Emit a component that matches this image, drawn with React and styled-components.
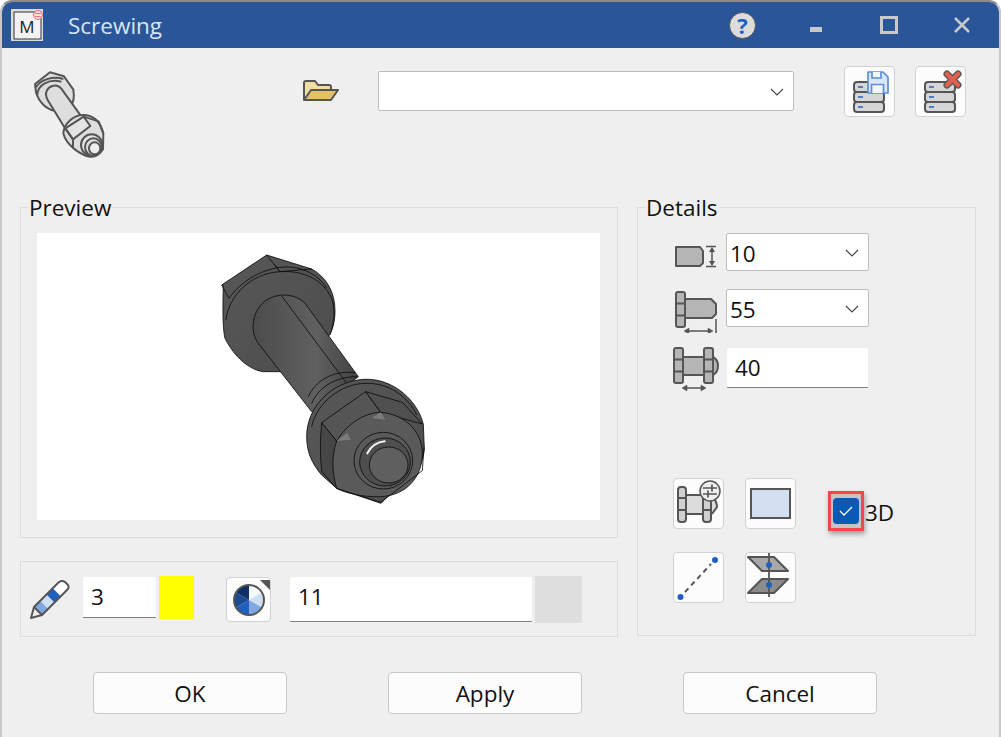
import styled, { createGlobalStyle } from "styled-components";

const GlobalStyle = createGlobalStyle`
  html, body { margin: 0; padding: 0; background: #fff; }
  * { box-sizing: border-box; }
`;

const INK = "#555";
const FILL = "#b5b5b5";
const BLUE = "#1f5fbf";

/* ---------- icons ---------- */

const AppIcon = () => (
  <svg width="32" height="32" viewBox="0 0 32 32">
    <rect width="32" height="32" fill="#dcdcdc" />
    <rect x="3" y="3" width="27" height="27" fill="#f2f2f2" stroke="#333" strokeWidth="1" />
    <text x="16" y="24" textAnchor="middle" fontFamily="Open Sans, sans-serif" fontSize="17" fill="#222">M</text>
    <g fill="#f7dcdc" stroke="#e57373" strokeWidth="1">
      <circle cx="27" cy="6" r="4.500" />
      <path d="M24 4.500h6M24 7.500h6" />
    </g>
  </svg>
);

const BoltSmall = () => (
  <svg width="74" height="90" viewBox="99 213 222 270">
    <g fill="#dedede" stroke={INK} strokeWidth="6" strokeLinejoin="round">
      <path d="M105 252l45-35 42 12 28 40c3 20 0 40-8 48-15 12-32 18-48 15-25-4-47-25-56-55z" />
      <path d="M108 262c12-22 50-35 82-25M112 285c0-30 35-50 72-40" fill="none" />
      <path d="M143 300c-12-22 0-38 14-42 10-3 20 0 27 8l62 86-50 34z" />
      <path d="M190 400c2-30 30-55 60-55 30 0 50 18 60 55l-1 48c-10 16-25 24-40 22-20-3-70-30-79-70z" />
      <path d="M196 385l55-35 20 28-52 40z" fill="#e4e4e4" />
      <path d="M196 385l23 33v28M251 350l45 14 14 36" fill="none" />
      <ellipse cx="275" cy="435" rx="32" ry="32" fill="#e4e4e4" />
      <ellipse cx="280" cy="441" rx="25" ry="26" fill="#dedede" />
      <ellipse cx="284" cy="445" rx="17" ry="18" fill="#eee" />
    </g>
  </svg>
);

const FolderIcon = () => (
  <svg width="38" height="24" viewBox="0 0 38 24">
    <path d="M2 21V4c0-1 .7-2 2-2h9l3 4h11c1 0 2 1 2 2v4" fill="#f0dda0" stroke={INK} strokeWidth="2" strokeLinejoin="round" />
    <path d="M2 21l7-10h27l-7 10z" fill="#e3c165" stroke={INK} strokeWidth="2" strokeLinejoin="round" />
  </svg>
);

const Chevron = () => (
  <svg width="14" height="8" viewBox="0 0 14 8">
    <path d="M1 1l6 6 6-6" fill="none" stroke="#444" strokeWidth="1.100" />
  </svg>
);

const DbStack = () => (
  <g fill="#d6d6d6" stroke={INK} strokeWidth="2">
    <rect x="10" y="16" width="30" height="10" rx="3" />
    <rect x="10" y="26" width="30" height="10" rx="3" />
    <rect x="10" y="36" width="30" height="10" rx="3" />
    <path d="M14 21h5M14 31h5M14 41h5" stroke={BLUE} strokeWidth="1.500" />
  </g>
);

const SaveDbIcon = () => (
  <svg width="51" height="51" viewBox="0 0 51 51">
    <DbStack />
    <path d="M24 6h15l5 5v16H24z" fill="#dbe6f6" stroke="#5a8fdc" strokeWidth="1.700" strokeLinejoin="round" />
    <path d="M28 6v6h9V6M27.500 27v-8.500h12V27" fill="#f3f6fb" stroke="#5a8fdc" strokeWidth="1.700" />
  </svg>
);

const DeleteDbIcon = () => (
  <svg width="51" height="51" viewBox="0 0 51 51">
    <DbStack />
    <path d="M32 8l11 11M43 8L32 19" stroke={INK} strokeWidth="7" strokeLinecap="round" />
    <path d="M32 8l11 11M43 8L32 19" stroke="#e0604f" strokeWidth="4.500" strokeLinecap="round" />
  </svg>
);

/* the big bolt, coordinates are 3x so the outlines come out at a pixel */
const BoltPreview = () => (
  <svg width="240" height="270" viewBox="0 0 720 810">
    <defs>
      <linearGradient id="steel" x1="0" y1="0" x2="1" y2="1">
        <stop offset="0" stopColor="#585858" />
        <stop offset="1" stopColor="#4c4c4c" />
      </linearGradient>
      <linearGradient id="shank" x1="0" y1="0" x2="1" y2="0">
        <stop offset="0" stopColor="#4c4c4c" />
        <stop offset="0.600" stopColor="#606060" />
        <stop offset="1" stopColor="#424242" />
      </linearGradient>
    </defs>
    <g stroke="#0c0c0c" strokeWidth="2.500" strokeLinejoin="round" fill="url(#steel)">
      <path d="M65 135L200 45l135 42c45 25 70 70 70 125 0 35-8 60-20 78l-135 105h-60c-55-8-95-60-115-100-5-20-8-60-5-160z" />
      <path d="M200 45l40 50 95-8M65 135l22 40M222 72l18 23" fill="none" />
      <path d="M87 175C125 120 185 90 240 82c55-6 110 15 140 62" fill="none" />
      <path d="M78 240C85 170 150 100 240 95c70-5 130 25 155 80 10 30 10 70-5 110" fill="none" />
      <path d="M175 310c-30-40-15-105 25-130 35-22 85-20 115 10l160 220-140 105z" fill="url(#shank)" />
      <path d="M245 168l205 275" fill="none" />
      <path d="M325 470c20-45 70-80 140-72" fill="none" />
      <path d="M335 490c18-45 70-80 135-80" fill="none" />
      <path d="M320 590c0-90 75-165 170-172 95-5 165 70 180 135l3 75c-5 50-30 85-70 100l-60 62-133-45-45-40c-30-35-45-70-45-115z" />
      <path d="M335 560c15-70 85-128 160-130 70-3 130 40 155 95" fill="none" />
      <path d="M365 548l45 55v142l-45-50c-5-50-5-100 0-147z" fill="#464646" />
      <path d="M365 548L497 455l45 62-132 86z" fill="#555" />
      <path d="M497 455l110 32 60 65-125-35z" fill="#505050" />
      <path d="M542 517c70 5 125 55 125 125 0 70-50 125-125 128-50 2-105-10-132-25-15-50-15-100 0-142 30-50 80-84 132-86z" fill="#5a5a5a" />
      <path d="M410 603l32-24 10 20zM515 534l27-17 14 22z" fill="#7c7c7c" stroke="none" />
      <path d="M410 745l132 42 125-95 5-70" fill="none" />
      <ellipse cx="550" cy="662" rx="88" ry="85" fill="#5a5a5a" />
      <ellipse cx="555" cy="666" rx="76" ry="72" fill="#4e4e4e" />
      <path d="M502 640c12-22 30-34 52-36" fill="none" stroke="#f2f2f2" strokeWidth="6" strokeLinecap="round" />
      <ellipse cx="566" cy="675" rx="58" ry="54" fill="#5f5f5f" />
    </g>
  </svg>
);

const Arrow = ({ x1, x2, y }) => (
  <g stroke={INK} fill={INK}>
    <path d={`M${x1 + 2} ${y}H${x2 - 2}`} strokeWidth="1.500" />
    <path d={`M${x1} ${y}l5-3v6zM${x2} ${y}l-5-3v6z`} strokeWidth="0.500" />
  </g>
);

const DiameterIcon = () => (
  <svg width="50" height="32" viewBox="0 0 50 32">
    <path d="M4 11h24l3 4v12l-3 3H4z" fill={FILL} stroke={INK} strokeWidth="2" strokeLinejoin="round" />
    <path d="M34 10.500h10M34 30.500h10" stroke={INK} strokeWidth="1.500" />
    <path d="M40 12v17" stroke={INK} strokeWidth="1.500" />
    <path d="M40 11l-3 5h6zM40 30l-3-5h6z" fill={INK} />
  </svg>
);

const LengthIcon = () => (
  <svg width="50" height="50" viewBox="0 0 50 50">
    <path d="M12 16h27l5 5v10l-4 4H12z" fill={FILL} stroke={INK} strokeWidth="2" strokeLinejoin="round" />
    <rect x="4" y="9" width="9" height="35" rx="2" fill={FILL} stroke={INK} strokeWidth="2" />
    <path d="M4 20.500h9M4 32.500h9" stroke={INK} strokeWidth="2" />
    <path d="M44 36v14" stroke={INK} strokeWidth="1.500" />
    <Arrow x1={12} x2={41} y={48} />
  </svg>
);

const GripIcon = () => (
  <svg width="50" height="50" viewBox="0 0 50 50">
    <rect x="10" y="14" width="23" height="18" fill={FILL} stroke={INK} strokeWidth="2" />
    <path d="M41 14c4 2 5 5 5 9s-1 7-5 9" fill={FILL} stroke={INK} strokeWidth="2" />
    <rect x="2" y="5" width="9" height="35" rx="2" fill={FILL} stroke={INK} strokeWidth="2" />
    <rect x="32" y="5" width="9" height="35" rx="2" fill={FILL} stroke={INK} strokeWidth="2" />
    <path d="M2 16.500h9M2 28.500h9M32 16.500h9M32 28.500h9" stroke={INK} strokeWidth="2" />
    <Arrow x1={10} x2={34} y={45} />
  </svg>
);

const BoltSettingsIcon = () => (
  <svg width="51" height="51" viewBox="0 0 51 51">
    <rect x="12" y="17" width="26" height="19" fill="#dcdcdc" stroke={INK} strokeWidth="2" />
    <path d="M38 18c4 3 6 7 6 11l-5 7" fill="#dcdcdc" stroke={INK} strokeWidth="2" />
    <rect x="5" y="9" width="8" height="35" rx="3" fill="#d0d0d0" stroke={INK} strokeWidth="2" />
    <rect x="30" y="9" width="8" height="35" rx="3" fill="#d0d0d0" stroke={INK} strokeWidth="2" />
    <path d="M5 20h8M5 32h8M30 20h8M30 32h8" stroke={INK} strokeWidth="2" />
    <circle cx="37" cy="13" r="10" fill="#eee" stroke={INK} strokeWidth="1.500" />
    <path d="M30 10h14M30 16h14M39 6.500v7M35 12.500v7" stroke={INK} strokeWidth="1.700" />
  </svg>
);

const RectIcon = () => (
  <svg width="51" height="51" viewBox="0 0 51 51">
    <rect x="6" y="11" width="39" height="29" fill="#d3e0f2" stroke={INK} strokeWidth="2" />
  </svg>
);

const LineIcon = () => (
  <svg width="51" height="51" viewBox="0 0 51 51">
    <path d="M12 40L38 12" stroke={INK} strokeWidth="2" strokeDasharray="5 4" />
    <circle cx="7.500" cy="45" r="3" fill={BLUE} />
    <circle cx="42" cy="8" r="3" fill={BLUE} />
  </svg>
);

const PlanesIcon = () => (
  <svg width="51" height="51" viewBox="0 0 51 51">
    <path d="M3 5h26l14 14H17z" fill="#a8a8a8" stroke={INK} strokeWidth="2" strokeLinejoin="round" />
    <path d="M3 41l14-14h26L29 41z" fill="#8c8c8c" stroke={INK} strokeWidth="2" strokeLinejoin="round" />
    <path d="M24 1v44" stroke={INK} strokeWidth="1.800" />
    <circle cx="24" cy="13" r="3" fill={BLUE} />
    <circle cx="24" cy="33" r="3" fill={BLUE} />
  </svg>
);

const PenIcon = () => (
  <svg width="42" height="42" viewBox="0 0 42 42">
    <path d="M5 28L30 3q3-2 6 0l3 3q1.500 3-1 5L13 36z" fill="#fff" />
    <path d="M5 28l6.250-6.250 8 8L13 36z" fill="#7fa8e0" />
    <path d="M11.250 21.750l6.250-6.250 8 8-6.250 6.250z" fill="#cfdff3" />
    <path d="M17.500 15.500l6.250-6.250 8 8-6.250 6.250z" fill={BLUE} />
    <path d="M2 39L5 28 30 3q3-2 6 0l3 3q1.500 3-1 5L13 36zM5 28l8 8" fill="none" stroke={INK} strokeWidth="2" strokeLinejoin="round" />
  </svg>
);

// six wedges of the colour wheel, clockwise from the top
const WHEEL = ["#f5f8fc", "#cfdff3", "#7fa8e0", "#1f5fbf", "#1b4a8f", "#0f2f66"];

const wedge = (i) => {
  const at = (a) => [15 + 15 * Math.sin(a), 15 - 15 * Math.cos(a)];
  const [x1, y1] = at((i * Math.PI) / 3);
  const [x2, y2] = at(((i + 1) * Math.PI) / 3);
  return `M15 15L${x1} ${y1}A15 15 0 0 1 ${x2} ${y2}z`;
};

const WheelIcon = () => (
  <svg width="32" height="32" viewBox="-1 -1 32 32">
    {WHEEL.map((c, i) => <path key={c} d={wedge(i)} fill={c} />)}
    <circle cx="15" cy="15" r="15" fill="none" stroke={INK} strokeWidth="2" />
  </svg>
);

/* ---------- app ---------- */

export default function App() {
  return (
    <Window>
      <GlobalStyle />
      <TitleBar>
        <AppIcon />
        <Title>Screwing</Title>
        <TitleButtons>
          <TitleButton><HelpMark>?</HelpMark></TitleButton>
          <TitleButton>
            <svg width="12" height="18"><rect y="11" width="12" height="5" fill="#c9c9c9" /></svg>
          </TitleButton>
          <TitleButton>
            <svg width="18" height="18"><rect x="1.500" y="1.500" width="15" height="15" fill="none" stroke="#c9c9c9" strokeWidth="3" /></svg>
          </TitleButton>
          <TitleButton>
            <svg width="18" height="18"><path d="M2 2l14 14M16 2L2 16" stroke="#c9c9c9" strokeWidth="2.500" /></svg>
          </TitleButton>
        </TitleButtons>
      </TitleBar>

      <Toolbar>
        <BoltSlot><BoltSmall /></BoltSlot>
        <FolderSlot><FolderIcon /></FolderSlot>
        <Select $width={416} $height={40}><span /><Chevron /></Select>
        <ToolButtons>
          <IconButton><SaveDbIcon /></IconButton>
          <IconButton><DeleteDbIcon /></IconButton>
        </ToolButtons>
      </Toolbar>

      <Main>
        <LeftColumn>
          <Group>
            <Legend $ml={-9}>Preview</Legend>
            <Canvas><BoltPreview /></Canvas>
          </Group>
          <PenBar>
            <PenSlot><PenIcon /></PenSlot>
            <TextInput $width={73} $height={41} $pb={2}>3</TextInput>
            <Swatch $width={35} $height={43} $color="#ffff00" $ml={3} />
            <WheelButton><WheelIcon /></WheelButton>
            <TextInput $width={242} $height={45} $ml={19} $pb={5}>11</TextInput>
            <Swatch $width={47} $height={47} $color="#dedede" $ml={3} />
          </PenBar>
        </LeftColumn>

        <DetailsGroup>
          <Legend $ml={-27}>Details</Legend>
          <DetailRow $height={38}>
            <DetailIcon><DiameterIcon /></DetailIcon>
            <Select $width={143} $height={38}><span>10</span><Chevron /></Select>
          </DetailRow>
          <DetailRow $height={38} $mt={18}>
            <DetailIcon><LengthIcon /></DetailIcon>
            <Select $width={143} $height={38}><span>55</span><Chevron /></Select>
          </DetailRow>
          <DetailRow $height={40} $mt={21}>
            <DetailIcon><GripIcon /></DetailIcon>
            <TextInput $width={141} $height={40} $ml={1}>40</TextInput>
          </DetailRow>
          <ToolGrid>
            <IconButton><BoltSettingsIcon /></IconButton>
            <IconButton><RectIcon /></IconButton>
            <CheckWrap>
              <CheckFocus>
                <CheckBox>
                  <svg width="16" height="12" viewBox="0 0 16 12">
                    <path d="M2 6l4 4 8-8" fill="none" stroke="#fff" strokeWidth="1.300" />
                  </svg>
                </CheckBox>
              </CheckFocus>
              <CheckLabel>3D</CheckLabel>
            </CheckWrap>
            <IconButton><LineIcon /></IconButton>
            <IconButton><PlanesIcon /></IconButton>
          </ToolGrid>
        </DetailsGroup>
      </Main>

      <Footer>
        <DialogButton>OK</DialogButton>
        <DialogButton>Apply</DialogButton>
        <DialogButton>Cancel</DialogButton>
      </Footer>
    </Window>
  );
}

/* ---------------- STYLES ---------------- */

const FONT = `"Open Sans", "Noto Sans", "Liberation Sans", sans-serif`;

const Window = styled.div`
  width: 1001px;
  height: 737px;
  background: #efefef;
  border: 2px solid #8c8c8c;
  border-bottom: 0;
  border-left-color: #c8c8c8;
  border-right-color: #c8c8c8;
  border-radius: 12px 12px 0 0;
  overflow: hidden;
  font-family: ${FONT};
  color: #111;
`;

const TitleBar = styled.div`
  height: 46px;
  background: #2a5599;
  display: flex;
  align-items: center;
  padding-left: 9px;
`;

const Title = styled.div`
  margin-left: 25px;
  font-size: 22.5px;
  color: #d8e6f7;
`;

const TitleButtons = styled.div`
  margin-left: auto;
  display: flex;
  align-items: center;
  padding-right: 1px;
`;

const TitleButton = styled.div`
  width: 73px;
  height: 46px;
  display: flex;
  align-items: center;
  justify-content: center;
`;

const HelpMark = styled.div`
  width: 27px;
  height: 27px;
  border-radius: 50%;
  background: #dcdcdc;
  border: 1px solid #555;
  color: #1f5fbf;
  font-weight: 700;
  font-size: 22px;
  line-height: 25px;
  text-align: center;
`;

const Toolbar = styled.div`
  height: 147px;
  display: flex;
  align-items: flex-start;
  padding: 23px 33px 0 31px;
`;

const BoltSlot = styled.div`
  width: 74px;
  height: 90px;
`;

const FolderSlot = styled.div`
  margin: 8px 38px 0 195px;
`;

const Select = styled.div`
  width: ${(p) => p.$width}px;
  height: ${(p) => p.$height}px;
  background: #fff;
  border: 1px solid #bdbdbd;
  border-radius: 2px;
  display: flex;
  align-items: center;
  justify-content: space-between;
  padding: 2px 9px 0 3px;
  font-size: 22.5px;
  flex-shrink: 0;
`;

const ToolButtons = styled.div`
  margin: -5px 0 0 auto;
  display: flex;
  gap: 20px;
`;

const IconButton = styled.div`
  width: 51px;
  height: 51px;
  background: #fcfcfc;
  border: 1px solid #d2d2d2;
  border-radius: 4px;
  display: flex;
  align-items: center;
  justify-content: center;
  svg { margin: -1px; flex-shrink: 0; }
`;

const Main = styled.div`
  display: flex;
  gap: 19px;
  padding: 0 23px 0 18px;
  align-items: flex-start;
`;

const LeftColumn = styled.div`
  width: 598px;
  display: flex;
  flex-direction: column;
  gap: 23px;
`;

const Group = styled.fieldset`
  margin: 0;
  min-width: 0;
  border: 1px solid #dcdcdc;
  padding: 14px 17px 17px 16px;
`;

const Legend = styled.legend`
  margin-left: ${(p) => p.$ml}px;
  padding: 0 1px;
  font-size: 22.5px;
  line-height: 26px;
  height: 24px;
`;

const Canvas = styled.div`
  height: 287px;
  background: #fff;
  display: flex;
  align-items: center;
  justify-content: center;
  svg { margin: 0 0 3px 3px; }
`;

const PenBar = styled.div`
  height: 76px;
  border: 1px solid #dcdcdc;
  display: flex;
  align-items: flex-start;
  padding: 15px 0 0 8px;
`;

const PenSlot = styled.div`
  width: 54px;
  height: 42px;
  margin-top: 2px;
`;

const TextInput = styled.div`
  width: ${(p) => p.$width}px;
  height: ${(p) => p.$height}px;
  margin-left: ${(p) => p.$ml || 0}px;
  background: #fff;
  border-bottom: 1px solid #808080;
  border-radius: 2px 2px 0 0;
  display: flex;
  align-items: center;
  padding: 0 0 ${(p) => p.$pb || 0}px 8px;
  font-size: 22.5px;
  flex-shrink: 0;
`;

const Swatch = styled.div`
  width: ${(p) => p.$width}px;
  height: ${(p) => p.$height}px;
  margin: -1px 0 0 ${(p) => p.$ml}px;
  background: ${(p) => p.$color};
`;

const WheelButton = styled.div`
  position: relative;
  width: 45px;
  height: 45px;
  margin-left: 32px;
  background: #fcfcfc;
  border: 1px solid #d2d2d2;
  border-radius: 4px;
  display: flex;
  align-items: center;
  justify-content: center;
  &::after {
    content: "";
    position: absolute;
    top: 2px;
    right: 0;
    border-top: 10px solid #555;
    border-left: 10px solid transparent;
  }
`;

const DetailsGroup = styled(Group)`
  width: 339px;
  height: 441px;
  padding: 14px 0 0 34px;
`;

const DetailRow = styled.div`
  display: flex;
  align-items: center;
  height: ${(p) => p.$height}px;
  margin-top: ${(p) => p.$mt || 0}px;
`;

const DetailIcon = styled.div`
  width: 54px;
  display: flex;
  justify-content: flex-start;
  flex-shrink: 0;
`;

const ToolGrid = styled.div`
  margin: 90px 0 0 1px;
  display: grid;
  grid-template-columns: 51px 51px auto;
  grid-auto-rows: 51px;
  column-gap: 21px;
  row-gap: 23px;
`;

const CheckWrap = styled.div`
  display: flex;
  align-items: center;
  margin: 14px 0 0 11px;
`;

const CheckFocus = styled.div`
  width: 36px;
  height: 40px;
  border: 3px solid #f04848;
  background: #c4c4c4;
  box-shadow: 1px 3px 5px rgba(0, 0, 0, 0.35);
  display: flex;
  align-items: center;
  justify-content: center;
  flex-shrink: 0;
`;

const CheckBox = styled.div`
  width: 26px;
  height: 26px;
  border-radius: 4px;
  background: #0a5ab5;
  display: flex;
  align-items: center;
  justify-content: center;
`;

const CheckLabel = styled.div`
  font-size: 22.5px;
  margin: 3px 0 0 1px;
`;

const Footer = styled.div`
  display: flex;
  gap: 101px;
  padding: 35px 0 0 91px;
`;

const DialogButton = styled.div`
  width: 194px;
  height: 42px;
  background: #fcfcfc;
  border: 1px solid #c8c8c8;
  border-radius: 4px;
  display: flex;
  align-items: center;
  justify-content: center;
  font-size: 22.5px;
`;
